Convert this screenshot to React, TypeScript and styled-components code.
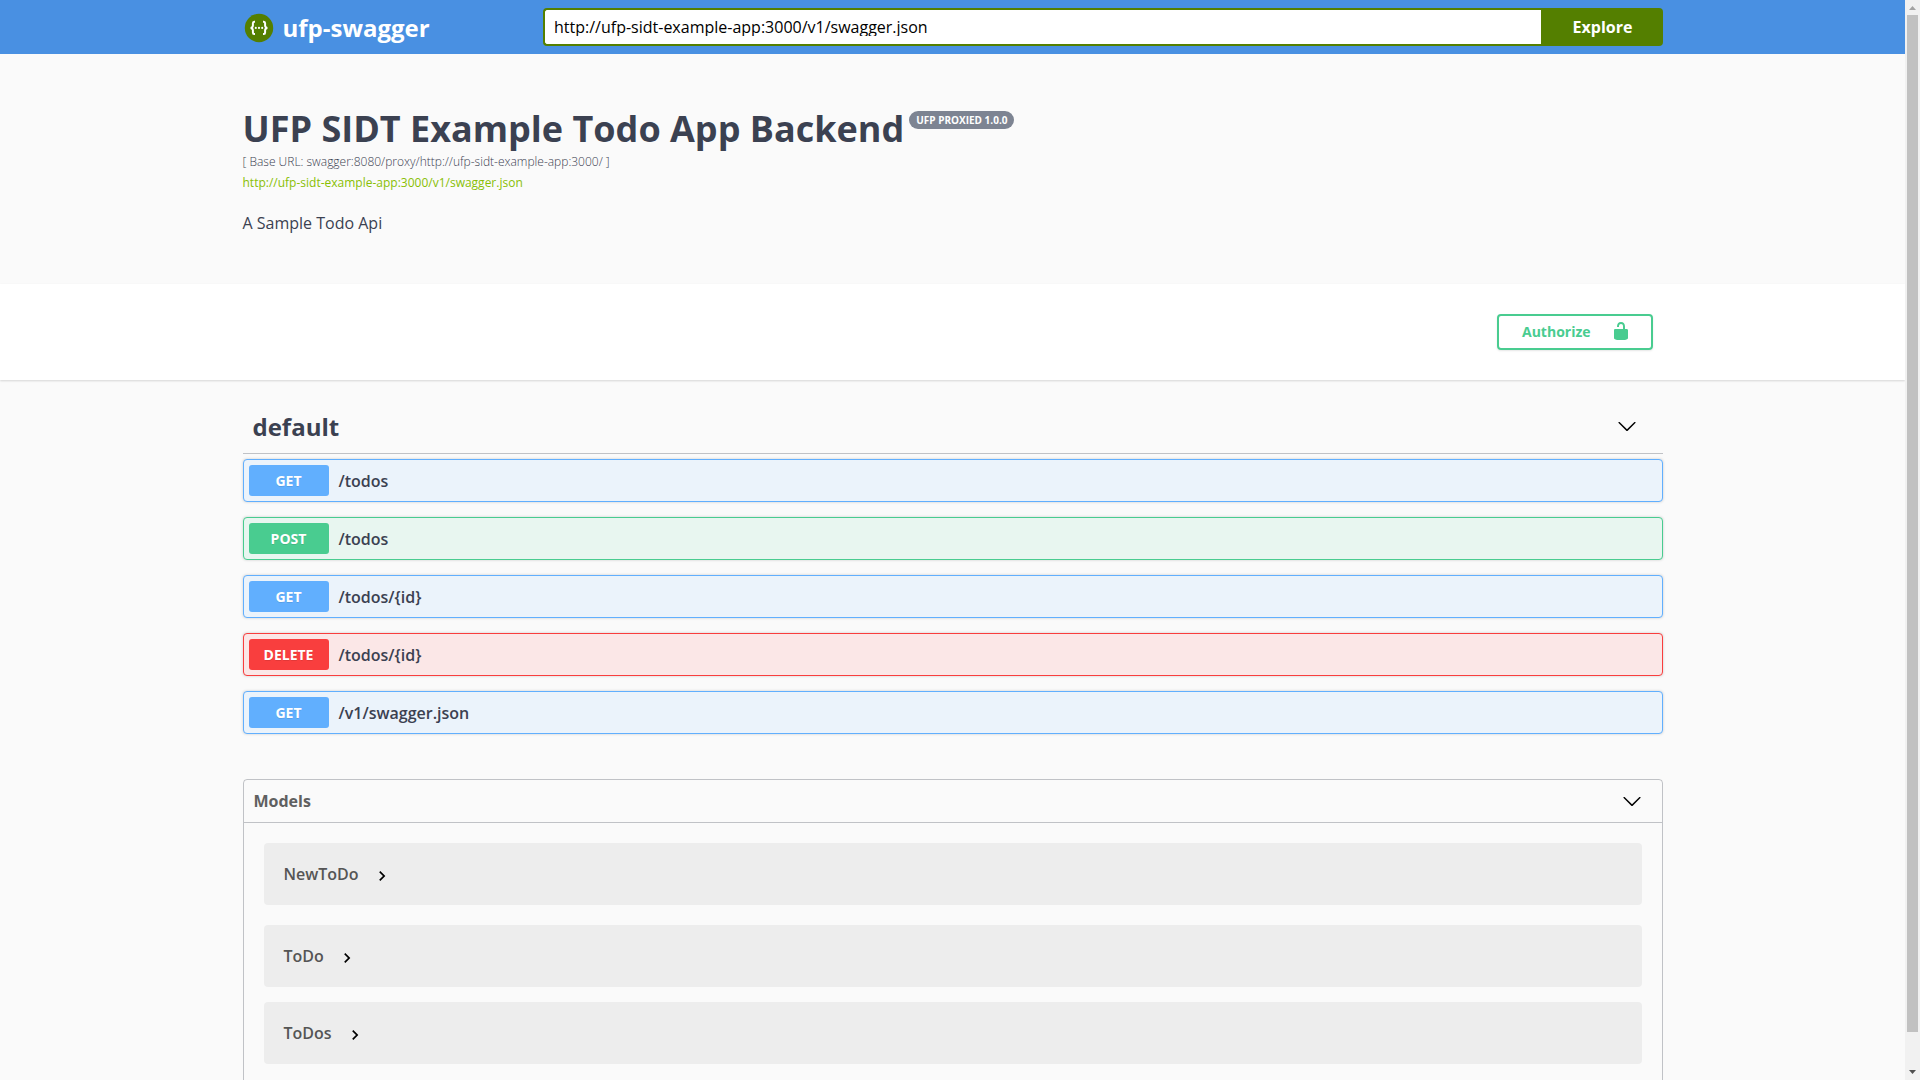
import React from "react";
import styled, { createGlobalStyle } from "styled-components";

const GlobalStyle = createGlobalStyle`
  *, *::before, *::after { box-sizing: border-box; }
  html, body { margin: 0; padding: 0; overflow: hidden; }
  body { background: #fafafa; font-family: "Open Sans", sans-serif; color: #3b4151; }
`;

const Shell = styled.div`
  display: grid;
  grid-template-columns: minmax(0, 1fr) 15px;
  height: 1080px;
  overflow: hidden;
`;

const Page = styled.main`
  height: 1080px;
  overflow: hidden;
  background: #fafafa;
`;

const Wrapper = styled.div`
  width: 100%;
  max-width: 1460px;
  margin: 0 auto;
  padding: 0 20px;
`;

const Topbar = styled.header`
  background: #4990e2;
  height: 54px;
  padding: 8px 0;
`;

const TopbarRow = styled(Wrapper)`
  display: flex;
  align-items: center;
`;

const Brand = styled.a`
  display: flex;
  align-items: center;
  flex: 1;
  color: #fff;
  font-size: 24px;
  font-weight: 700;
  line-height: 36px;
`;

const BrandName = styled.span`
  padding-top: 2px;
`;

const LogoSvg = styled.svg`
  width: 30px;
  height: 30px;
  margin: 2px 9px 0 1px;
`;

const SearchForm = styled.div`
  display: flex;
  width: 1120px;
`;

const UrlField = styled.div`
  flex: 1;
  min-width: 0;
  height: 38px;
  padding: 8px 10px 8px 9.5px;
  border: 2px solid #547f00;
  border-right: 0;
  border-radius: 4px 0 0 4px;
  background: #fff;
`;

const UrlInput = styled.input`
  display: block;
  width: 100%;
  height: 18px;
  margin: 0;
  padding: 0;
  border: 0;
  outline: none;
  overflow: hidden;
  overflow: clip;
  contain: paint;
  background: transparent;
  color: #000;
  font: 400 16px "Open Sans", sans-serif;
`;

const ExploreButton = styled.button`
  width: 122px;
  height: 38px;
  padding: 0 0 1px 2px;
  border: 0;
  border-radius: 0 4px 4px 0;
  background: #547f00;
  color: #fff;
  font: 700 16px "Open Sans", sans-serif;
`;

const Info = styled.section`
  height: 230px;
  padding-top: 50px;
`;

const Title = styled.h1`
  display: flex;
  align-items: flex-start;
  margin: 0;
  font-size: 36px;
  font-weight: 700;
  line-height: 49px;
`;

const Version = styled.small`
  height: 18px;
  margin: 7px 0 0 5px;
  padding: 0 7px;
  border-radius: 57px;
  background: #7d8492;
  color: #fff;
  font-size: 10px;
  line-height: 18px;
`;

const BaseUrl = styled.div`
  font-size: 12px;
  font-weight: 300;
  line-height: 17px;
`;

const SpecLink = styled.a`
  display: block;
  margin-top: 4px;
  color: #89bf04;
  font-size: 12px;
  line-height: 17px;
`;

const Description = styled.p`
  margin: 21px 0 0;
  font-size: 16px;
  line-height: 22px;
`;

const SchemeBar = styled.section`
  height: 96px;
  padding: 30px 0;
  background: #fff;
  box-shadow: 0 1px 2px rgba(0, 0, 0, 0.15);
`;

const SchemeRow = styled(Wrapper)`
  display: flex;
  justify-content: flex-end;
  padding-right: 30px;
`;

const AuthorizeButton = styled.button`
  display: flex;
  align-items: center;
  justify-content: space-between;
  width: 156px;
  height: 36px;
  padding: 0 20px 2px 23.5px;
  border: 2px solid #49cc90;
  border-radius: 4px;
  background: transparent;
  box-shadow: 0 1px 2px rgba(0, 0, 0, 0.1);
  color: #49cc90;
  font: 700 14px "Open Sans", sans-serif;
`;

const Icon = styled.svg<{ $size: number }>`
  flex: none;
  width: ${(p) => p.$size}px;
  height: ${(p) => p.$size}px;
  fill: currentColor;
`;

const TagHeader = styled.div`
  display: flex;
  align-items: center;
  justify-content: space-between;
  height: 54px;
  margin: 20px 0 5px;
  padding: 0 26px 1px 10px;
  border-bottom: 1px solid rgba(59, 65, 81, 0.3);
`;

const TagName = styled.h2`
  margin: 0;
  font-size: 24px;
  font-weight: 700;
  line-height: 33px;
`;

const Black = styled.span`
  display: flex;
  color: #000;
`;

const Operations = styled.div`
  display: grid;
  gap: 15px;
`;

const tones = {
  GET: ["#61affe", "#ebf3fb"],
  POST: ["#49cc90", "#e8f6f0"],
  DELETE: ["#f93e3e", "#fbe7e7"],
};
type Method = keyof typeof tones;

const Operation = styled.div<{ $method: Method }>`
  display: flex;
  align-items: center;
  height: 43px;
  padding: 5px;
  border: 1px solid ${(p) => tones[p.$method][0]};
  border-radius: 4px;
  background: ${(p) => tones[p.$method][1]};
  box-shadow: 0 0 3px rgba(0, 0, 0, 0.19);
`;

const MethodBadge = styled.span<{ $method: Method }>`
  width: 80px;
  height: 31px;
  border-radius: 3px;
  background: ${(p) => tones[p.$method][0]};
  color: #fff;
  font-size: 14px;
  font-weight: 700;
  line-height: 31px;
  text-align: center;
  text-shadow: 0 1px 0 rgba(0, 0, 0, 0.1);
`;

const Path = styled.span`
  padding-left: 10px;
  font-size: 16px;
  font-weight: 600;
  line-height: 22px;
`;

const Models = styled.section`
  height: 400px;
  margin-top: 45px;
  border: 1px solid rgba(59, 65, 81, 0.3);
  border-radius: 4px;
`;

const ModelsHeader = styled.div`
  display: flex;
  align-items: center;
  justify-content: space-between;
  height: 43px;
  padding: 0 20px 0 10px;
  border-bottom: 1px solid rgba(59, 65, 81, 0.3);
`;

const ModelsTitle = styled.h3`
  margin: 0;
  color: #606060;
  font-size: 16px;
  font-weight: 700;
  line-height: 22px;
`;

const Model = styled.div<{ $top: number }>`
  display: flex;
  align-items: center;
  gap: 13px;
  height: 62px;
  margin: ${(p) => p.$top}px 20px 0;
  padding: 0 20px;
  border-radius: 4px;
  background: rgba(0, 0, 0, 0.05);
  color: #555;
  font-size: 16px;
  font-weight: 600;
`;

const ModelArrow = styled(Black)`
  padding-top: 4px;
`;

const Scrollbar = styled.div`
  display: flex;
  flex-direction: column;
  align-items: center;
  height: 1080px;
  background: #f1f1f1;
`;

const Thumb = styled.div`
  width: 11px;
  height: 1017px;
  background: #c1c1c1;
`;

const Spacer = styled.div`
  flex: 1;
`;

const ScrollArrow = styled.svg`
  display: block;
  width: 15px;
  height: 15px;
`;

const DownArrow = () => (
  <Icon $size={20} viewBox="0 0 20 20">
    <path d="M17.418 6.109c.272-.268.709-.268.979 0s.271.701 0 .969l-7.908 7.83c-.27.268-.707.268-.979 0l-7.908-7.83c-.27-.268-.27-.701 0-.969.271-.268.709-.268.979 0L10 13.25l7.418-7.141z" />
  </Icon>
);

const Logo = () => (
  <LogoSvg viewBox="0 0 30 30">
    <circle cx="15" cy="15" r="14.2" fill="#547f00" />
    <g fill="none" stroke="#fff" strokeWidth="2">
      <path d="M11 8.7H10.2Q8.9 8.7 8.9 10.2V12.6Q8.9 14.7 6.6 14.9Q8.9 15.1 8.9 17.2V19.6Q8.9 21.1 10.2 21.1H11" />
      <path d="M19 8.7H19.8Q21.1 8.7 21.1 10.2V12.6Q21.1 14.7 23.4 14.9Q21.1 15.1 21.1 17.2V19.6Q21.1 21.1 19.8 21.1H19" />
    </g>
    <g fill="#fff">
      <circle cx="11.8" cy="14.9" r="1.05" />
      <circle cx="15" cy="14.9" r="1.05" />
      <circle cx="18.2" cy="14.9" r="1.05" />
    </g>
  </LogoSvg>
);

const operations: { method: Method; path: string }[] = [
  { method: "GET", path: "/todos" },
  { method: "POST", path: "/todos" },
  { method: "GET", path: "/todos/{id}" },
  { method: "DELETE", path: "/todos/{id}" },
  { method: "GET", path: "/v1/swagger.json" },
];

const models = [
  { name: "NewToDo", top: 20 },
  { name: "ToDo", top: 20 },
  { name: "ToDos", top: 15 },
];

const specUrl = "http://ufp-sidt-example-app:3000/v1/swagger.json";

export default function App() {
  return (
    <Shell>
      <GlobalStyle />
      <Page>
        <Topbar>
          <TopbarRow>
            <Brand>
              <Logo />
              <BrandName>ufp-swagger</BrandName>
            </Brand>
            <SearchForm>
              <UrlField>
                <UrlInput type="text" defaultValue={specUrl} />
              </UrlField>
              <ExploreButton>Explore</ExploreButton>
            </SearchForm>
          </TopbarRow>
        </Topbar>
        <Info>
          <Wrapper>
            <Title>
              UFP SIDT Example Todo App Backend
              <Version>UFP PROXIED 1.0.0</Version>
            </Title>
            <BaseUrl>[ Base URL: swagger:8080/proxy/http://ufp-sidt-example-app:3000/ ]</BaseUrl>
            <SpecLink>{specUrl}</SpecLink>
            <Description>A Sample Todo Api</Description>
          </Wrapper>
        </Info>
        <SchemeBar>
          <SchemeRow>
            <AuthorizeButton>
              Authorize
              <Icon $size={20} viewBox="0 0 20 20">
                <path d="M15.8 8H14V5.6C14 2.703 12.665 1 10 1 7.334 1 6 2.703 6 5.6V6h2v-.801C8 3.754 8.797 3 10 3c1.203 0 2 .754 2 2.199V8H4c-.553 0-1 .646-1 1.199V17c0 .549.428 1.139.951 1.307l1.197.387C5.672 18.861 6.55 19 7.1 19h5.8c.549 0 1.428-.139 1.951-.307l1.196-.387c.524-.167.953-.757.953-1.306V9.199C17 8.646 16.352 8 15.8 8z" />
              </Icon>
            </AuthorizeButton>
          </SchemeRow>
        </SchemeBar>
        <Wrapper>
          <TagHeader>
            <TagName>default</TagName>
            <Black>
              <DownArrow />
            </Black>
          </TagHeader>
          <Operations>
            {operations.map((op, i) => (
              <Operation key={i} $method={op.method}>
                <MethodBadge $method={op.method}>{op.method}</MethodBadge>
                <Path>{op.path}</Path>
              </Operation>
            ))}
          </Operations>
          <Models>
            <ModelsHeader>
              <ModelsTitle>Models</ModelsTitle>
              <Black>
                <DownArrow />
              </Black>
            </ModelsHeader>
            {models.map((m) => (
              <Model key={m.name} $top={m.top}>
                {m.name}
                <ModelArrow>
                  <Icon $size={20} viewBox="0 0 24 24">
                    <path d="M10 6L8.59 7.41 13.17 12l-4.58 4.59L10 18l6-6z" />
                  </Icon>
                </ModelArrow>
              </Model>
            ))}
          </Models>
        </Wrapper>
      </Page>
      <Scrollbar>
        <ScrollArrow viewBox="0 0 15 15">
          <path d="M4 10L7.5 6L11 10z" fill="#a3a3a3" />
        </ScrollArrow>
        <Thumb />
        <Spacer />
        <ScrollArrow viewBox="0 0 15 15">
          <path d="M4 5L7.5 9L11 5z" fill="#505050" />
        </ScrollArrow>
      </Scrollbar>
    </Shell>
  );
}
